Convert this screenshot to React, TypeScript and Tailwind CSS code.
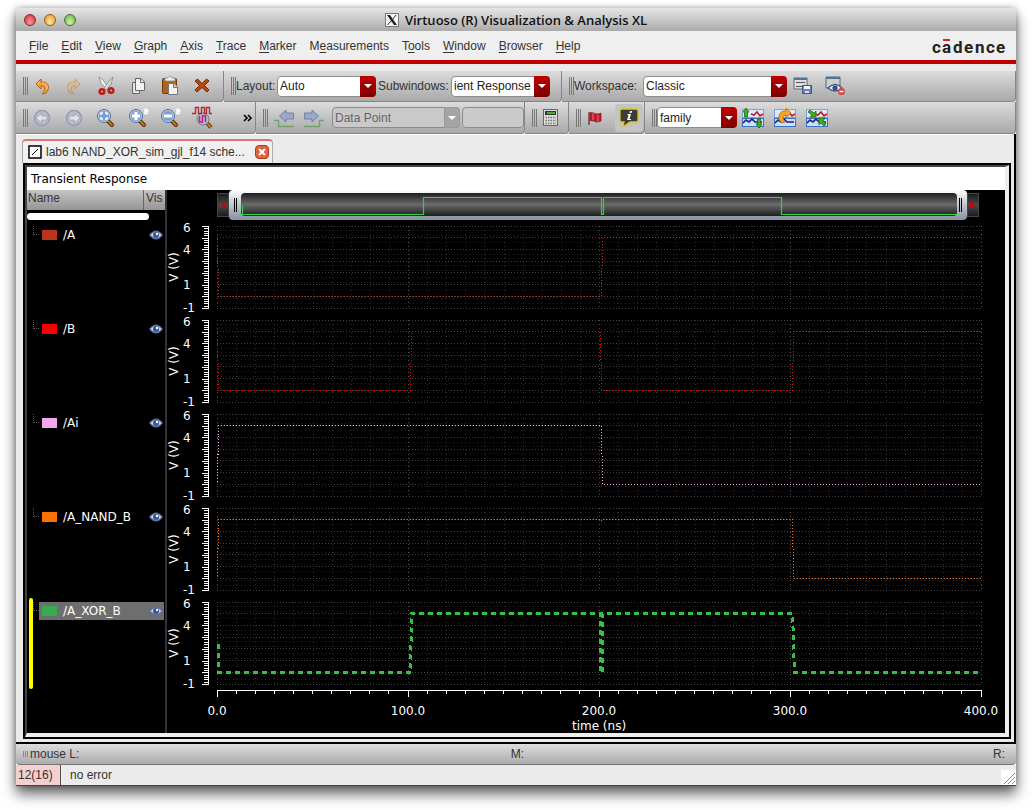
import { useState } from 'react';
import type { ReactNode } from 'react';

interface Signal {
  id: string;
  name: string;
  color: string;
  points: string;
  bold?: boolean;
}

// Trace points are in the 764 x 83 space of a strip: 1.91 units per ns, 5V at 11, 0V at 70
const signals: Signal[] = [
  { id: 'a', name: '/A', color: '#b8341c', points: '0,11 1,70 384,70 385,11 764,11' },
  {
    id: 'b',
    name: '/B',
    color: '#f60000',
    points: '0,11 1,70 193,70 194,11 383,11 384,70 575,70 576,11 764,11',
  },
  { id: 'ai', name: '/Ai', color: '#f4a6f0', points: '0,70 1,11 384,11 385,70 764,70' },
  {
    id: 'nand',
    name: '/A_NAND_B',
    color: '#fb7203',
    points: '0,70 1,11 384,11 384,14 385,11 575,11 576,70 764,70',
  },
  {
    id: 'xor',
    name: '/A_XOR_B',
    color: '#34c244',
    points: '1,41 1,70 193,70 194,11 383,11 383,70 385,70 385,11 575,11 577,70 764,70',
    bold: true,
  },
];

const menus = [
  ['', 'F', 'ile'],
  ['', 'E', 'dit'],
  ['', 'V', 'iew'],
  ['', 'G', 'raph'],
  ['', 'A', 'xis'],
  ['', 'T', 'race'],
  ['', 'M', 'arker'],
  ['M', 'e', 'asurements'],
  ['T', 'o', 'ols'],
  ['', 'W', 'indow'],
  ['', 'B', 'rowser'],
  ['', 'H', 'elp'],
];

const majorRows = [0, 11, 23, 35, 46, 58, 70, 82];
const minorRows = [4, 9, 16, 28, 32, 39, 44, 51, 56, 63, 72, 77];
const columns = Array.from({ length: 41 }, (_, i) => Math.round(i * 19.1));
const axisTicks = Array.from({ length: 36 }, (_, i) => i);

function UndoIcon({ flip }: { flip?: boolean }) {
  return (
    <svg width="22" height="22" viewBox="0 0 22 22" className={flip ? 'opacity-40' : ''}>
      <g transform={flip ? 'matrix(-1 0 0 1 22 0)' : undefined}>
        <path
          d="M5 9 L10 4 V7 C17 6 20 12 15 18 L11 19 C14 16 15 11 10 11 V14 Z"
          fill="#f2a03a"
          stroke="#b5651a"
          strokeLinejoin="round"
        />
        <path d="M7 9 L9 7 M11 8 C15 8 17 11 16 14" fill="none" stroke="#ffd08a" />
      </g>
    </svg>
  );
}

function CutIcon() {
  return (
    <svg width="22" height="22" viewBox="0 0 22 22">
      <path d="M4 2 L7 4 L15 14 L12 15 L6 8 Z" fill="#f4f4f4" stroke="#777" strokeWidth=".7" />
      <path d="M18 2 L15 5 L9 13 L11 15 L16 9 Z" fill="#dcdcdc" stroke="#777" strokeWidth=".7" />
      <circle cx="7" cy="16.500" r="2.300" fill="none" stroke="#c01c14" strokeWidth="2.600" />
      <circle cx="16" cy="15.500" r="2.300" fill="none" stroke="#c01c14" strokeWidth="2.600" />
    </svg>
  );
}

function CopyIcon() {
  return (
    <svg width="22" height="22" viewBox="0 0 22 22">
      <path d="M5.500 7.500 H12.500 V18.500 H5.500 Z" fill="#e6e6e6" stroke="#666" />
      <path d="M8.500 3.500 H14 L17.500 7 V15.500 H8.500 Z" fill="#f2f2f2" stroke="#666" />
      <path d="M13.500 3.500 V7.500 H17.500" fill="none" stroke="#666" />
    </svg>
  );
}

function PasteIcon() {
  return (
    <svg width="22" height="22" viewBox="0 0 22 22">
      <rect x="3.500" y="3.500" width="14" height="15" rx="1" fill="#b3611a" stroke="#6f3a0b" />
      <path d="M6 6 V3 H9 C9 1 13 1 13 3 H16 V6 Z" fill="#eee" stroke="#888" strokeWidth=".8" />
      <path d="M9.500 8.500 H15 L18.500 12 V19.500 H9.500 Z" fill="#f2f2f2" stroke="#777" />
      <path d="M14.500 8.500 V12.500 H18.500" fill="#ccc" stroke="#777" />
    </svg>
  );
}

function DeleteIcon() {
  return (
    <svg width="22" height="22" viewBox="0 0 22 22">
      <path
        d="M4 6 L6.500 4 L11 8.500 L15.500 4 L18 6 L13.500 10.500 L18 15 L16 17 L11 12.500 L6 17 L4 15 L8.500 10.500 Z"
        fill="#b8480f"
        stroke="#641f02"
        strokeWidth=".9"
      />
    </svg>
  );
}

function HistoryIcon({ flip }: { flip?: boolean }) {
  return (
    <svg width="20" height="20" viewBox="0 0 20 20">
      <circle cx="10" cy="10" r="7.500" fill="#b9bdca" stroke="#949bb8" strokeWidth="1.500" />
      <path
        d="M4 10 L9.500 5 V8 H15 V12 H9.500 V15 Z"
        fill="#e2e4e7"
        stroke="#9da2ac"
        strokeWidth=".8"
        transform={flip ? 'matrix(-1 0 0 1 20 0)' : undefined}
      />
    </svg>
  );
}

function ZoomIcon({ kind }: { kind: 'fit' | 'in' | 'out' }) {
  return (
    <svg width="24" height="22" viewBox="0 0 24 22">
      <path d="M14 14 L18 18" stroke="#5c3004" strokeWidth="4" strokeLinecap="round" />
      <path d="M14 14 L18 18" stroke="#c17a22" strokeWidth="2" strokeLinecap="round" />
      <circle cx="10" cy="9" r="6.500" fill="#7ba0cf" stroke="#5a6f8c" />
      <circle cx="10" cy="9" r="5.500" fill="none" stroke="#c9dbee" strokeWidth=".8" />
      {kind === 'fit' && (
        <path
          d="M7 8 V6 H9 M11 6 H13 V8 M13 10 V12 H11 M9 12 H7 V10"
          fill="none"
          stroke="#fff"
          strokeWidth="1.400"
        />
      )}
      {kind !== 'fit' && <path d="M6 9 H14" stroke="#fff" strokeWidth="3" />}
      {kind === 'in' && <path d="M10 5 V13" stroke="#fff" strokeWidth="3" />}
      {kind !== 'fit' && (
        <path d="M18 2.500 H21.500 V4.500 H19 V6.500 H22" fill="none" stroke="#fff" strokeWidth="1.500" />
      )}
    </svg>
  );
}

function WaveZoomIcon() {
  return (
    <svg width="24" height="24" viewBox="0 0 24 24">
      <path d="M17 17 L21 21.500" stroke="#5c3004" strokeWidth="4" />
      <path d="M17 17 L21 21.500" stroke="#c17a22" strokeWidth="2" />
      <circle cx="13" cy="13" r="6" fill="#a9bccb" stroke="#6f7f8c" />
      <path
        d="M2 7.500 H5.500 V1.500 H8.500 V7.500 H11.500 V1.500 H14.500 V7.500 H16.500 V1.500 H19.500 V7.500 H22"
        fill="none"
        stroke="#b02c35"
        strokeWidth="1.400"
      />
      <path d="M9.500 10 V16 H12.500 V10 H15.500 V16" fill="none" stroke="#c21a86" strokeWidth="1.400" />
    </svg>
  );
}

function StepIcon({ flip }: { flip?: boolean }) {
  return (
    <svg width="22" height="20" viewBox="0 0 22 20">
      <g transform={flip ? 'matrix(-1 0 0 1 22 0)' : undefined}>
        <path d="M1 12.500 H5.500 V18.500 H21" fill="none" stroke="#6ca36c" strokeWidth="1.400" />
        <path d="M6.500 8 L13 2 V5 H20.500 V11 H13 V14 Z" fill="#9ba8ca" stroke="#7180a8" />
      </g>
    </svg>
  );
}

function CalculatorIcon() {
  return (
    <svg width="16" height="18" viewBox="0 0 16 18">
      <rect x=".5" y=".5" width="14" height="16" fill="#dcdcdc" stroke="#666" />
      <rect x="2" y="2" width="11" height="4" fill="#333" />
      <path d="M4 4 H12" stroke="#58d42c" strokeWidth="1.500" />
      <path
        d="M2.500 8.500 H13 M2.500 11.500 H13 M2.500 14.500 H13"
        stroke="#777"
        strokeWidth="1.500"
        strokeDasharray="1.500 1"
      />
    </svg>
  );
}

function FlagIcon() {
  return (
    <svg width="16" height="16" viewBox="0 0 16 16">
      <path d="M2 2 V15" stroke="#6b4a4a" strokeWidth="1.500" />
      <path d="M3 3 C6 1 8 6 14 3 V11 C8 14 6 9 3 11 Z" fill="#b81e28" stroke="#84131b" strokeWidth=".7" />
      <path d="M6 3 V10 M11 5 V12" stroke="#e2606a" strokeWidth="1.200" />
    </svg>
  );
}

function InfoIcon() {
  return (
    <svg width="20" height="20" viewBox="0 0 20 20">
      <path
        d="M3 1 H17 Q19 1 19 3 V12 Q19 14 17 14 H11 L4 19 L5 14 H3 Q1 14 1 12 V3 Q1 1 3 1 Z"
        fill="#3b3b3b"
        stroke="#dcc51e"
        strokeWidth="1.300"
      />
      <path d="M11 3 H13 L12.500 5 H10.500 Z M8.500 6 H12 L10.500 11 H12 V12 H8 L9.500 7 H8.500 Z" fill="#fff" />
    </svg>
  );
}

function SaveWorkspaceIcon() {
  return (
    <svg width="20" height="18" viewBox="0 0 20 18">
      <path d="M1 1 H14 V12 H1 Z" fill="#dedede" stroke="#5d6b75" />
      <path d="M1 2 H14" stroke="#55748e" strokeWidth="2" />
      <path d="M3 5.500 H12 M3 9.500 H12" stroke="#555" />
      <rect x="9.500" y="8.500" width="9" height="8" fill="#6d7fc0" stroke="#47548c" />
      <rect x="11" y="9" width="6" height="3" fill="#f3f5ff" />
      <rect x="12" y="14" width="4" height="2" fill="#dde" />
    </svg>
  );
}

function HideWorkspaceIcon() {
  return (
    <svg width="22" height="20" viewBox="0 0 22 20">
      <path d="M2 1 H16 V12 H2 Z" fill="#cfcfcf" stroke="#5d6b75" />
      <path d="M2 2 H16" stroke="#55748e" strokeWidth="2" />
      <path d="M4 12 Q11 5 18 12 Q11 18 4 12 Z" fill="#e9eef6" stroke="#3f5785" strokeWidth="1.300" />
      <circle cx="11" cy="12" r="2.600" fill="#324f8c" />
      <circle cx="17.500" cy="15.500" r="3.500" fill="#d1474c" />
      <path d="M15.500 15.500 H19.500" stroke="#fff" strokeWidth="1.400" />
    </svg>
  );
}

function StripIcon({ kind }: { kind: 'split' | 'rotate' | 'combine' }) {
  return (
    <svg width="24" height="22" viewBox="0 0 24 22">
      <rect x="1.500" y="2.500" width="21" height="8" fill="#dce9f9" stroke="#7fa5d8" />
      <rect x="1.500" y="11.500" width="21" height="8" fill="#cfe0f6" stroke="#3c6fc0" />
      <path d="M10 7 L13 8 L16 5 L19 9 L22 7" fill="none" stroke="#c3152c" strokeWidth="1.600" />
      <path d="M2 16 L5 13 L8 15 L11 12 L14 15 H21" fill="none" stroke="#14257d" strokeWidth="1.600" />
      {kind === 'split' && (
        <g fill="#3fae22" stroke="#1d6a0c" strokeWidth=".8">
          <path d="M5 1 L8 5 H6.500 V10 H3.500 V5 H2 Z" />
          <path d="M18 21 L15 17 H16.500 V12 H19.500 V17 H21 Z" />
        </g>
      )}
      {kind === 'rotate' && (
        <path
          d="M9 16 C3 12 6 3 13 4 V1 L18 6 L13 11 V8 C10 8 9 11 12 15 Z"
          fill="#f6a42a"
          stroke="#b96a0a"
          strokeWidth=".8"
        />
      )}
      {kind === 'combine' && (
        <g fill="#3fae22" stroke="#1d6a0c" strokeWidth=".8">
          <path d="M3 5 L5 3 L9 6 L11 4 V10 H5 L7 8 Z" />
          <path d="M21 17 L19 19 L16 16 L14 18 V11 H20 L18 14 Z" />
        </g>
      )}
    </svg>
  );
}

function EyeIcon() {
  return (
    <svg width="14" height="12" viewBox="0 0 14 12">
      <path d="M0 6 Q7 -3 14 6 Q7 15 0 6 Z" fill="#5c70a3" />
      <path d="M1.500 6 Q7 0 12.500 6 Q7 12 1.500 6 Z" fill="#cdd6e8" />
      <circle cx="7" cy="6" r="3" fill="#3b5590" />
      <circle cx="8" cy="5" r="1.200" fill="#fff" />
    </svg>
  );
}

function IconButton({ label, children }: { label: string; children: ReactNode }) {
  return (
    <button aria-label={label} className="flex h-7 w-7 shrink-0 items-center justify-center">
      {children}
    </button>
  );
}

function ToolGroup({ className, children }: { className: string; children: ReactNode }) {
  return (
    <div
      className={`flex h-full items-center rounded-br border-r border-b border-[#868686] bg-linear-to-b from-[#dcdcdc] to-[#a9a9a9] ${className}`}
    >
      <span className="h-[18px] w-[5px] shrink-0 border-x border-[#777] px-px">
        <span className="block h-full w-px bg-[#777]" />
      </span>
      {children}
    </div>
  );
}

interface ComboProps {
  id: string;
  label?: string;
  options: string[];
  disabled?: boolean;
  className: string;
}

function Combo({ id, label, options, disabled, className }: ComboProps) {
  return (
    <div className={`relative h-[21px] ${className}`}>
      <select
        id={id}
        aria-label={label}
        disabled={disabled}
        className="h-full w-full appearance-none rounded border border-[#8c8c8c] bg-white pr-4 pl-[2px] text-[#222] disabled:bg-[#c9c9c9] disabled:text-[#666] disabled:opacity-100"
      >
        {options.map((option) => (
          <option key={option}>{option}</option>
        ))}
      </select>
      <span
        className={`pointer-events-none absolute inset-y-0 right-0 flex w-4 items-center justify-center rounded-r ${
          disabled ? 'border border-[#999] bg-[#a4a4a4]' : 'bg-linear-to-b from-[#c00000] to-[#7d0000]'
        }`}
      >
        <svg width="8" height="4" viewBox="0 0 8 4">
          <path d="M0 0 H8 L4 4 Z" fill="#fff" />
        </svg>
      </span>
    </div>
  );
}

function TitleBar() {
  return (
    <div className="flex h-[23px] items-center rounded-t bg-linear-to-b from-[#e6e6e6] to-[#ababab] px-2">
      <div className="flex flex-1 gap-2">
        <button aria-label="Close window" className="h-3 w-3 rounded-full border border-[#8b2a2a] bg-radial-[at_50%_75%] from-[#ff9a9a] to-[#cf2433]" />
        <button aria-label="Minimize window" className="h-3 w-3 rounded-full border border-[#94611a] bg-radial-[at_50%_75%] from-[#ffe79a] to-[#e2952a]" />
        <button aria-label="Zoom window" className="h-3 w-3 rounded-full border border-[#47772f] bg-radial-[at_50%_75%] from-[#cdf5a8] to-[#5faf3e]" />
      </div>
      <div className="flex items-center gap-[6px]">
        <svg width="14" height="14" viewBox="0 0 14 14">
          <rect x=".5" y=".5" width="13" height="13" fill="#f4f4f4" stroke="#777" />
          <path d="M2 2 H5 L12 12 H9 Z" fill="#222" />
          <path d="M11 2 L8 6 M6 8 L2.500 12" stroke="#333" />
        </svg>
        <h1 className="font-['Open_Sans','Liberation_Sans',sans-serif] text-[13px] font-semibold text-[#111]">
          Virtuoso (R) Visualization &amp; Analysis XL
        </h1>
      </div>
      <div className="flex-1" />
    </div>
  );
}

function MenuBar() {
  return (
    <div className="flex h-[33px] items-center justify-between border-b-4 border-[#c00000] bg-[#efefef] pr-[10px] pl-[13px]">
      <nav className="flex gap-[13px]">
        {menus.map(([before, key, after]) => (
          <button key={before + key + after}>
            {before}
            <span className="underline underline-offset-2">{key}</span>
            {after}
          </button>
        ))}
      </nav>
      <svg width="74" height="20" viewBox="0 0 74 20">
        <text
          x="0 10 21 32 43 54 64"
          y="17"
          fill="#222"
          className="font-['Liberation_Sans_Narrow','Roboto',sans-serif] text-[17px] font-bold"
        >
          cadence
        </text>
        <rect x="11" y="3" width="7" height="2" fill="#d8202c" />
      </svg>
    </div>
  );
}

function Toolbars() {
  return (
    <div className="bg-[#ebebeb] pt-[7px]">
      <div className="flex h-[31px]">
        <ToolGroup className="w-[208px] pl-[7px]">
          <div className="flex gap-1">
            <IconButton label="Undo"><UndoIcon /></IconButton>
            <IconButton label="Redo"><UndoIcon flip /></IconButton>
            <IconButton label="Cut"><CutIcon /></IconButton>
            <IconButton label="Copy"><CopyIcon /></IconButton>
            <IconButton label="Paste"><PasteIcon /></IconButton>
            <IconButton label="Delete"><DeleteIcon /></IconButton>
          </div>
        </ToolGroup>
        <ToolGroup className="w-[338px] pr-[11px] pl-[7px]">
          <label htmlFor="layout" className="w-[41px]">Layout:</label>
          <Combo id="layout" options={['Auto', 'Vertical', 'Horizontal', 'Card']} className="flex-1" />
          <label htmlFor="subwindows" className="w-[75px] pl-[2px]">Subwindows:</label>
          <Combo id="subwindows" options={['ient Response']} className="flex-1" />
        </ToolGroup>
        <ToolGroup className="flex-1 pl-[7px]">
          <label htmlFor="workspace" className="w-[69px]">Workspace:</label>
          <Combo id="workspace" options={['Classic', 'Browser']} className="w-[144px]" />
          <div className="flex gap-1 pl-[2px]">
            <IconButton label="Save workspace"><SaveWorkspaceIcon /></IconButton>
            <IconButton label="Hide workspace"><HideWorkspaceIcon /></IconButton>
          </div>
        </ToolGroup>
      </div>
      <div className="flex h-8">
        <ToolGroup className="w-[240px] pl-[7px]">
          <div className="flex gap-1">
            <IconButton label="Back"><HistoryIcon /></IconButton>
            <IconButton label="Forward"><HistoryIcon flip /></IconButton>
            <IconButton label="Fit"><ZoomIcon kind="fit" /></IconButton>
            <IconButton label="Zoom in"><ZoomIcon kind="in" /></IconButton>
            <IconButton label="Zoom out"><ZoomIcon kind="out" /></IconButton>
            <IconButton label="Zoom waveform"><WaveZoomIcon /></IconButton>
          </div>
          <button aria-label="More tools" className="flex flex-1 justify-end pr-[2px]">
            <svg width="10" height="8" viewBox="0 0 10 8">
              <path d="M1 1 L4 4 L1 7 M5 1 L8 4 L5 7" fill="none" stroke="#000" strokeWidth="1.600" />
            </svg>
          </button>
        </ToolGroup>
        <ToolGroup className="w-[269px] pl-[7px]">
          <div className="flex gap-[2px] pl-[2px]">
            <IconButton label="Previous edge"><StepIcon /></IconButton>
            <IconButton label="Next edge"><StepIcon flip /></IconButton>
          </div>
          <Combo id="edge" label="Step mode" options={['Data Point']} disabled className="ml-1 flex-1" />
          <input
            aria-label="Step value"
            disabled
            className="ml-[2px] h-[21px] w-[62px] rounded border border-[#8c8c8c] bg-[#cacaca]"
          />
        </ToolGroup>
        <ToolGroup className="w-11 pl-[7px]">
          <IconButton label="Calculator"><CalculatorIcon /></IconButton>
        </ToolGroup>
        <ToolGroup className="w-[76px] pl-[7px]">
          <IconButton label="Flag"><FlagIcon /></IconButton>
          <button
            aria-label="Info balloons"
            aria-pressed="true"
            className="ml-[6px] flex h-7 w-7 items-center justify-center rounded bg-[#c4c4c4]"
          >
            <InfoIcon />
          </button>
        </ToolGroup>
        <ToolGroup className="flex-1 pl-[7px]">
          <Combo id="family" label="Family" options={['family', 'none']} className="w-20" />
          <div className="flex gap-1 pl-[2px]">
            <IconButton label="Split strips"><StripIcon kind="split" /></IconButton>
            <IconButton label="Swap strips"><StripIcon kind="rotate" /></IconButton>
            <IconButton label="Combine strips"><StripIcon kind="combine" /></IconButton>
          </div>
        </ToolGroup>
      </div>
    </div>
  );
}

function Tab() {
  return (
    <div className="ml-[6px] flex h-6 w-[251px] items-center rounded-t border-x border-t-2 border-x-[#aaa] border-t-[#dc7474] bg-[#f0f0f0] pl-[5px]">
      <svg width="14" height="14" viewBox="0 0 14 14" className="shrink-0">
        <path d="M1 1 H13 V13 H1 Z" fill="#fff" stroke="#000" strokeWidth="1.500" />
        <path d="M4 10 L10 4" stroke="#000" />
      </svg>
      <span className="flex-1 pl-1 whitespace-nowrap">lab6 NAND_XOR_sim_gjl_f14 sche...</span>
      <button
        aria-label="Close tab"
        className="mr-[3px] flex h-[14px] w-[14px] shrink-0 items-center justify-center rounded-sm border border-[#b7391a] bg-[#dd6540]"
      >
        <svg width="8" height="8" viewBox="0 0 8 8">
          <path d="M1 1 L7 7 M7 1 L1 7" stroke="#fff" strokeWidth="2" />
        </svg>
      </button>
    </div>
  );
}

interface SignalListProps {
  selected: string;
  onSelect: (id: string) => void;
}

function SignalList({ selected, onSelect }: SignalListProps) {
  return (
    <div className="w-[140px] shrink-0 border-r-2 border-[#333]">
      <div className="flex h-5 bg-linear-to-b from-[#c4c4c4] to-[#959595] leading-4">
        <span className="w-[117px] border-r border-[#666] pl-px">Name</span>
        <span className="pl-[2px]">Vis</span>
      </div>
      <input aria-label="Filter signals" className="mt-[3px] mb-[6px] block h-[7px] w-[122px] rounded-full bg-white" />
      <ul className="font-['DejaVu_Sans','Liberation_Sans',sans-serif]">
        {signals.map((signal) => (
          <li key={signal.id} className="relative h-[94px]">
            {signal.id === selected && (
              <span className="absolute -top-1 left-[2px] h-[91px] w-1 rounded-full bg-[#ffff00]" />
            )}
            <div className="flex">
              <span className="ml-[6px] h-[9px] w-[6px] border-b border-l border-dotted border-[#555]" />
              <button
                onClick={() => onSelect(signal.id)}
                className={`flex h-[18px] flex-1 items-center pr-px pl-[3px] text-white ${
                  signal.id === selected ? 'bg-[#6e6e6e]' : ''
                }`}
              >
                <svg width="15" height="10">
                  <rect width="15" height="10" fill={signal.bold ? '#36ab50' : signal.color} />
                </svg>
                <span className="flex-1 pl-[6px] text-left">{signal.name}</span>
                <EyeIcon />
              </button>
              <span className="w-px" />
            </div>
          </li>
        ))}
      </ul>
    </div>
  );
}

function Overview() {
  return (
    <div className="mr-[26px] ml-[50px] flex h-[30px] items-center">
      <button
        aria-label="Pan left"
        className="flex h-6 w-3 items-center justify-center border border-[#444] bg-linear-to-b from-[#1c1c1c] via-[#4a4a4a] to-[#1c1c1c]"
      >
        <svg width="8" height="8" viewBox="0 0 8 8">
          <path d="M7 1 V7 L1 4 Z" fill="#d00000" />
        </svg>
      </button>
      <div className="flex h-full flex-1 rounded bg-linear-to-b from-[#fdfdff] to-[#8791a1] pt-[3px] pb-1">
        <span className="ml-[5px] h-[14px] w-[3px] self-center border-x border-black" />
        <div className="mr-[2px] ml-1 h-[23px] flex-1 rounded-sm bg-linear-to-b from-[#1f1f1f] via-[#6c6c6c] to-[#1f1f1f]">
          <svg width="100%" height="23" viewBox="0 0 716 23" preserveAspectRatio="none" className="block">
            <polyline
              transform="translate(.5 .5)"
              points="1,12 1,21 182,21 182,4 360,4 360,21 362,21 362,4 540,4 540,21 716,21"
              fill="none"
              stroke="#2fd440"
              strokeWidth="1.200"
            />
          </svg>
        </div>
        <span className="mr-[5px] h-[14px] w-[3px] self-center border-x border-black" />
      </div>
      <button
        aria-label="Pan right"
        className="flex h-6 w-3 items-center justify-center border border-[#444] bg-linear-to-b from-[#1c1c1c] via-[#4a4a4a] to-[#1c1c1c]"
      >
        <svg width="8" height="8" viewBox="0 0 8 8">
          <path d="M1 1 V7 L7 4 Z" fill="#d00000" />
        </svg>
      </button>
    </div>
  );
}

function Strip({ signal }: { signal: Signal }) {
  return (
    <div className="flex h-[83px]">
      <svg width="50" height="83" className="shrink-0 overflow-visible" fill="#fff">
        <text x="-41" y="11" transform="rotate(-90)" textAnchor="middle">V (V)</text>
        <text x="16" y="6">6</text>
        <text x="16" y="28">4</text>
        <text x="16" y="63">1</text>
        <text x="16" y="86">-1</text>
        <g stroke="#fff" shapeRendering="crispEdges">
          <path d="M41.500 0 V83" />
          {axisTicks.map((tick) => {
            const y = Math.round((tick * 82) / 35) + 0.5;
            return <path key={tick} d={`M${tick % 5 === 0 ? 35 : 37} ${y} H41`} />;
          })}
        </g>
      </svg>
      <svg
        height="83"
        viewBox="0 0 765 83"
        preserveAspectRatio="none"
        className="min-w-0 flex-1 overflow-visible"
        shapeRendering="crispEdges"
        fill="none"
      >
        {minorRows.map((y) => (
          <path key={y} d={`M0 ${y + 0.5} H765`} stroke="#242424" strokeDasharray="1 3" />
        ))}
        {majorRows.map((y) => (
          <path key={y} d={`M0 ${y + 0.5} H765`} stroke="#404040" strokeDasharray="1 2" />
        ))}
        {columns.map((x, i) => (
          <path
            key={x}
            d={`M${x + 0.5} 0 V83`}
            stroke={i % 10 === 0 ? '#505050' : '#2a2a2a'}
            strokeDasharray="1 3"
          />
        ))}
        <polyline
          transform="translate(.5 .5)"
          points={signal.points}
          stroke={signal.color}
          strokeWidth={signal.bold ? 3 : 1}
          strokeDasharray={signal.bold ? '5 4' : '1 2'}
          strokeDashoffset={signal.bold ? 0 : 1}
        />
      </svg>
    </div>
  );
}

function TimeAxis() {
  return (
    <svg height="43" className="mt-[5px] ml-[50px] block w-[calc(100%-74px)] overflow-visible" fill="#fff">
      <g stroke="#fff" shapeRendering="crispEdges">
        <line x1="0" x2="100%" y1=".5" y2=".5" />
        {columns.map((x, i) => (
          <line key={x} x1={`${i * 2.5}%`} x2={`${i * 2.5}%`} y1="0" y2={i % 10 === 0 ? 7 : 4} />
        ))}
      </g>
      {['0.0', '100.0', '200.0', '300.0', '400.0'].map((label, i) => (
        <text key={label} x={`${i * 25}%`} y="25" textAnchor="middle">{label}</text>
      ))}
      <text x="50%" y="40" textAnchor="middle">time (ns)</text>
    </svg>
  );
}

function StatusBars() {
  return (
    <div>
      <div className="flex h-[21px] items-center rounded-b border-b border-[#777] bg-linear-to-b from-[#dedede] to-[#acacac] pr-[11px] pl-[7px]">
        <span className="h-[6px] w-[5px] border-x border-[#888] px-px">
          <span className="block h-full w-px bg-[#888]" />
        </span>
        <span className="flex-1 pl-[2px]">mouse L:</span>
        <span>M:</span>
        <span className="flex-1 text-right">R:</span>
      </div>
      <div className="flex h-[21px] items-center border-b border-[#444] bg-[#ebebeb]">
        <span className="flex h-full w-[45px] items-center border-r border-[#555] bg-[#f3cfcf] pl-[2px]">12(16)</span>
        <span className="flex-1 pl-[9px]">no error</span>
        <svg width="15" height="15" viewBox="0 0 15 15" className="self-end">
          <rect width="15" height="15" fill="#fff" />
          <path d="M3 14 L14 3 M7 14 L14 7 M11 14 L14 11" stroke="#888" />
        </svg>
      </div>
    </div>
  );
}

export default function App() {
  const [selected, setSelected] = useState('xor');

  return (
    <div className="min-h-screen bg-white px-4 pt-2 pb-6 font-['Liberation_Sans',Arial,sans-serif] text-[12px] leading-4 text-[#333]">
      <div className="rounded-t shadow-[0_8px_14px_rgba(0,0,0,0.6),0_0_6px_rgba(0,0,0,0.3)]">
        <TitleBar />
        <MenuBar />
        <Toolbars />
        <main className="border-r-2 border-b-2 border-black bg-[#ebebeb] pr-[3px] pb-[3px]">
          <div className="border-t border-white pt-1">
            <Tab />
          </div>
          <div className="ml-[7px] border-2 border-black">
            <div className="border-4 border-t-2 border-l-2 border-[#eee] border-t-[#444] border-l-[#444]">
              <h2 className="h-[23px] bg-white pl-1 font-['DejaVu_Sans','Liberation_Sans',sans-serif] text-[12px] leading-6 text-black">
                Transient Response
              </h2>
              <div className="flex bg-black">
                <SignalList selected={selected} onSelect={setSelected} />
                <div className="min-w-0 flex-1 font-['DejaVu_Sans','Liberation_Sans',sans-serif]">
                  <Overview />
                  <div className="mt-[6px] mr-[23px] flex flex-col gap-[11px]">
                    {signals.map((signal) => (
                      <Strip key={signal.id} signal={signal} />
                    ))}
                  </div>
                  <TimeAxis />
                </div>
              </div>
            </div>
          </div>
        </main>
        <StatusBars />
      </div>
    </div>
  );
}
